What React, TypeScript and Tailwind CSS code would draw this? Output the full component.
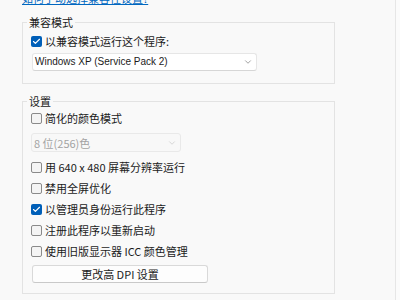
import { Check, ChevronDown } from 'lucide-react';

const font = { fontFamily: '"Noto Sans CJK SC", "Liberation Sans", sans-serif' };

const Box = ({ checked }: { checked?: boolean }) =>
  checked ? (
    <span className="w-[11px] h-[11px] rounded-[2px] bg-[#005fb8] flex items-center justify-center shrink-0">
      <Check className="w-[9px] h-[9px] text-white" strokeWidth={3} />
    </span>
  ) : (
    <span className="w-[11px] h-[11px] rounded-[2px] border border-[#8a8a8a] bg-[#f4f4f4] shrink-0" />
  );

const Row = ({ label, checked }: { label: string; checked?: boolean }) => (
  <div className="flex items-center h-[14px] gap-[3px] pl-[8px]">
    <Box checked={checked} />
    <span className="text-[11px] leading-[14px] text-[#1b1b1b] whitespace-nowrap">{label}</span>
  </div>
);

const App = () => {
  return (
    <div className="w-[400px] h-[300px] bg-[#f9f9f9] flex overflow-hidden" style={font}>
      <div className="w-[395px] flex flex-col pl-[22px]">
        <a className="-mt-[9px] h-[14px] text-[11px] leading-[14px] text-[#0067c0] underline whitespace-nowrap">
          如何手动选择兼容性设置?
        </a>

        <fieldset className="mt-[10px] w-[313px] border border-[#e3e3e3] pb-[12px]">
          <legend className="ml-[4px] px-[2px] text-[11px] leading-[14px] text-[#1b1b1b]">兼容模式</legend>
          <div className="pt-[5px]">
            <Row label="以兼容模式运行这个程序:" checked />
          </div>
          <div className="mt-[5px] ml-[9px] w-[225px] h-[18px] bg-white border border-[#e6e6e6] border-b-[#d6d6d6] rounded-[3px] flex items-center justify-between pl-[2px] pr-[3px]">
            <span className="text-[10px] leading-[14px] text-[#1b1b1b] font-['Liberation_Sans',sans-serif]">
              Windows XP (Service Pack 2)
            </span>
            <ChevronDown className="w-[10px] h-[10px] text-[#6a6a6a]" strokeWidth={1.5} />
          </div>
        </fieldset>

        <fieldset className="mt-[10px] w-[313px] border border-[#e3e3e3] pb-[10px]">
          <legend className="ml-[4px] px-[2px] text-[11px] leading-[14px] text-[#1b1b1b]">设置</legend>
          <div className="pt-[3px] flex flex-col">
            <Row label="简化的颜色模式" />
            <div className="mt-[8px] ml-[8px] w-[150px] h-[19px] bg-[#f8f8f8] border border-[#e9e9e9] rounded-[3px] flex items-center justify-between pl-[2px] pr-[3px]">
              <span className="text-[11px] leading-[14px] text-[#a3a3a3]">8 位(256)色</span>
              <ChevronDown className="w-[10px] h-[10px] text-[#c2c2c2]" strokeWidth={1.5} />
            </div>
            <div className="mt-[8px] flex flex-col gap-[7px]">
              <Row label="用 640 x 480 屏幕分辨率运行" />
              <Row label="禁用全屏优化" />
              <Row label="以管理员身份运行此程序" checked />
              <Row label="注册此程序以重新启动" />
              <Row label="使用旧版显示器 ICC 颜色管理" />
            </div>
            <button className="mt-[7px] ml-[9px] w-[176px] h-[18px] bg-[#fdfdfd] border border-[#d9d9d9] border-b-[#c9c9c9] rounded-[3px] text-[11px] leading-[14px] text-[#1b1b1b] flex items-center justify-center">
              更改高 DPI 设置
            </button>
          </div>
        </fieldset>
      </div>
      <div className="w-[1px] bg-[#e6e6e6]" />
      <div className="flex-1 bg-[#fbfbfb]" />
    </div>
  );
};

export default App;
